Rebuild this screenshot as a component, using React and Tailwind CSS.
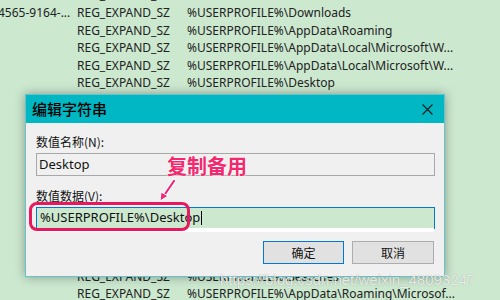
import React from "react";

const rows = [
  ["", "REG_EXPAND_SZ", "%USERPROFILE%\\Music"],
  ["4565-9164-...", "REG_EXPAND_SZ", "%USERPROFILE%\\Downloads"],
  ["", "REG_EXPAND_SZ", "%USERPROFILE%\\AppData\\Roaming"],
  ["", "REG_EXPAND_SZ", "%USERPROFILE%\\AppData\\Local\\Microsoft\\W..."],
  ["", "REG_EXPAND_SZ", "%USERPROFILE%\\AppData\\Local\\Microsoft\\W..."],
  ["", "REG_EXPAND_SZ", "%USERPROFILE%\\Desktop"],
  ["", "REG_EXPAND_SZ", "%USERPROFILE%\\Favorites"],
  ["", "REG_EXPAND_SZ", "%USERPROFILE%\\AppData\\Local\\Temp"],
  ["", "REG_EXPAND_SZ", "%USERPROFILE%\\AppData\\Local"],
  ["", "REG_EXPAND_SZ", "%USERPROFILE%\\Music"],
  ["", "REG_EXPAND_SZ", "%USERPROFILE%\\AppData\\Roaming"],
  ["", "REG_EXPAND_SZ", "%USERPROFILE%\\Pictures"],
  ["", "REG_EXPAND_SZ", "%USERPROFILE%\\AppData\\Roaming\\Mic..."],
  ["", "REG_EXPAND_SZ", "%USERPROFILE%\\Documents"],
  ["", "REG_EXPAND_SZ", "%USERPROFILE%\\AppData\\Roaming\\Mic..."],
  ["", "REG_EXPAND_SZ", "%USERPROFILE%\\Videos"],
  ["", "REG_EXPAND_SZ", "%USERPROFILE%\\Searches"],
  ["", "REG_EXPAND_SZ", "%USERPROFILE%\\AppData\\Roaming\\Microsof..."],
];

const sans = "font-['Segoe_UI','Noto_Sans','Noto_Sans_CJK_SC',sans-serif]";

const App = () => {
  return (
    <div className="relative w-[500px] h-[300px] overflow-hidden bg-[#cce8cf]">
      {/* registry list behind the dialog */}
      <div className={`-mt-[13.7px] -ml-[2px] text-[12px] text-[#222] ${sans}`}>
        {rows.map((r, i) => (
          <div key={i} className="grid grid-cols-[79px_110px_1fr] h-[17.6px] items-center whitespace-nowrap">
            <span>{r[0]}</span>
            <span>{r[1]}</span>
            <span>{r[2]}</span>
          </div>
        ))}
      </div>

      {/* edit string dialog */}
      <div className={`absolute left-[25px] top-[94px] w-[420px] h-[183px] flex flex-col border border-[#62c4cc] bg-[#f0f0f0] shadow-[0_0_10px_rgba(0,0,0,0.35)] ${sans}`}>
        <div className="h-[28px] bg-[#00b7c3] flex items-center justify-between pl-[6px] pr-[11px]">
          <span className="text-[15px] font-medium text-black font-['Noto_Sans_CJK_SC',sans-serif]">编辑字符串</span>
          <svg width="11" height="11" viewBox="0 0 11 11" className="text-[#1a1a1a]">
            <path d="M0.5 0.5 L10.5 10.5 M10.5 0.5 L0.5 10.5" stroke="currentColor" strokeWidth="1.1" />
          </svg>
        </div>
        <div className="flex flex-col pt-[11px] pl-[10px] pr-[9px] text-[12px] text-[#111]">
          <span className="leading-[16px] font-['Noto_Sans_CJK_SC',sans-serif]">数值名称(N):</span>
          <div className="mt-[3px] h-[23px] border border-[#a8a8a8] bg-[#f0f0f0] flex items-center pl-[2px] text-[13px]">
            Desktop
          </div>
          <span className="mt-[12px] leading-[16px] font-['Noto_Sans_CJK_SC',sans-serif]">数值数据(V):</span>
          <div className="mt-[3px] h-[22px] border border-[#0078d7] bg-white flex flex-col">
            <div className="flex-1 bg-[#cce8cf] flex items-center pl-[3px] text-[13px] text-[#111] border-b-[4px] border-white">
              <span>%USERPROFILE%\Desktop</span>
              <span className="ml-[1px] w-px h-[14px] bg-black" />
            </div>
          </div>
          <div className="mt-[12px] flex justify-end gap-[8px] pr-[1px]">
            <button className="w-[81px] h-[23px] border border-[#0078d7] bg-[#e1e1e1] text-[12px] text-[#111] font-['Noto_Sans_CJK_SC',sans-serif]">
              确定
            </button>
            <button className="w-[82px] h-[23px] border border-[#adadad] bg-[#e1e1e1] text-[12px] text-[#111] font-['Noto_Sans_CJK_SC',sans-serif]">
              取消
            </button>
          </div>
        </div>
      </div>

      {/* annotation */}
      <div className="absolute left-[29px] top-[202px] w-[161px] h-[29px] rounded-[8px] border-[3px] border-[#e8185f]" />
      <span className="absolute left-[167px] top-[153px] text-[20px] leading-[26px] font-bold text-[#f2296f] font-['Noto_Sans_CJK_SC',sans-serif] [text-shadow:0_0_2px_#fff,0_0_2px_#fff]">
        复制备用
      </span>
      <svg className="absolute left-[155px] top-[178px]" width="26" height="26" viewBox="0 0 26 26">
        <path d="M19 3 L8 19" stroke="#fff" strokeWidth="4" strokeLinecap="round" />
        <path d="M19 3 L8 19" stroke="#f0287a" strokeWidth="2.2" strokeLinecap="round" />
        <path d="M5 23 L6 14 L13 18 Z" fill="#f0287a" stroke="#fff" strokeWidth="1" />
      </svg>

      {/* watermark */}
      <span className="absolute left-[220px] top-[271px] text-[15px] leading-[18px] text-white/80 font-['Liberation_Sans',sans-serif] [text-shadow:0_0_1px_rgba(0,0,0,0.35)] whitespace-nowrap">
        https://blog.csdn.net/weixin_48093247
      </span>
    </div>
  );
};

export default App;
